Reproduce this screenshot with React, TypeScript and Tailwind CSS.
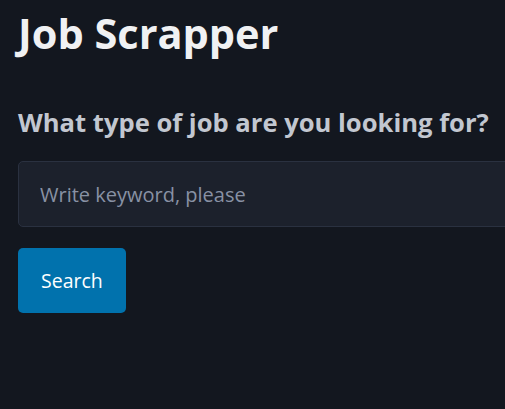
const App = () => {
  return (
    <main
      className="min-h-screen overflow-hidden bg-[#13171f] px-[18px] pt-[5px] text-[#c2c7d0]"
      style={{ fontFamily: '"Open Sans", "Noto Sans", sans-serif' }}
    >
      <h1 className="text-[41.5px] font-bold leading-[56px] text-[#f0f1f3]">Job Scrapper</h1>

      <h2 className="mt-[44px] whitespace-nowrap text-[25.6px] font-bold leading-[36px] text-[#c2c7d0]">
        What type of job are you looking for?
      </h2>

      <form className="mt-[20px]" onSubmit={(e) => e.preventDefault()}>
        <input
          type="text"
          placeholder="Write keyword, please"
          className="h-[66px] w-[700px] rounded-[5px] border border-[#2a3140] bg-[#1c212c] px-[21px] text-[20px] text-[#c2c7d0] placeholder:text-[#8891a4] outline-none"
        />
        <div className="mt-[21px]">
          <button
            type="submit"
            className="h-[65px] rounded-[5px] bg-[#0172ad] px-[23px] text-[19.5px] text-white"
          >
            Search
          </button>
        </div>
      </form>
    </main>
  );
};

export default App;
